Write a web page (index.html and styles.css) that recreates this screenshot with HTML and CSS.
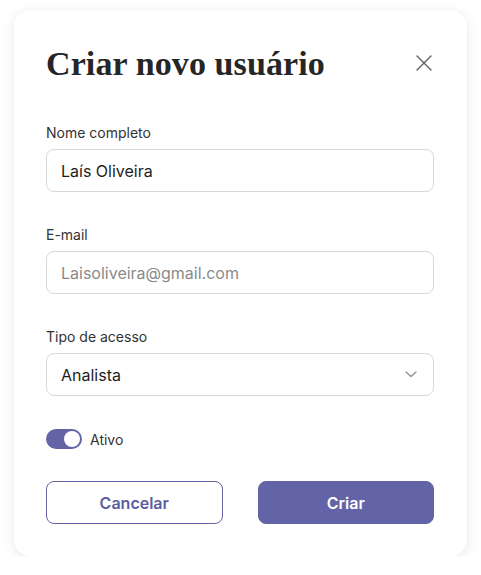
FILE: index.html
```html
<!DOCTYPE html>
<html lang="pt-BR">
<head>
<meta charset="utf-8">
<title>Criar novo usuário</title>
<link rel="stylesheet" href="styles.css">
</head>
<body>
<div class="card">
  <div class="header">
    <h1 class="title">Criar novo usuário</h1>
    <button class="close" aria-label="Fechar">
      <svg width="16" height="16" viewBox="0 0 16 16"><path d="M1 1L15 15M15 1L1 15" stroke="#5f5f5f" stroke-width="1.4" fill="none" stroke-linecap="round"/></svg>
    </button>
  </div>
  <div class="fields">
    <div class="field">
      <label class="label">Nome completo</label>
      <div class="input"><span class="value">Laís Oliveira</span></div>
    </div>
    <div class="field">
      <label class="label">E-mail</label>
      <div class="input"><span class="placeholder">Laisoliveira@gmail.com</span></div>
    </div>
    <div class="field">
      <label class="label">Tipo de acesso</label>
      <div class="input select"><span class="value">Analista</span>
        <svg width="12" height="7" viewBox="0 0 12 7"><path d="M1 1L6 5.5L11 1" stroke="#8a8a8a" stroke-width="1.2" fill="none" stroke-linecap="round" stroke-linejoin="round"/></svg>
      </div>
    </div>
    <div class="toggle-row">
      <span class="toggle"><span class="knob"></span></span>
      <span class="toggle-label">Ativo</span>
    </div>
  </div>
  <div class="actions">
    <button class="btn btn-outline">Cancelar</button>
    <button class="btn btn-primary">Criar</button>
  </div>
</div>
</body>
</html>
```
FILE: styles.css
```css
* { box-sizing: border-box; }
body {
  margin: 0;
  background: #ffffff;
  font-family: Inter, "Noto Sans", sans-serif;
}
.card {
  margin: 10px 0 0 14px;
  width: 453px;
  height: 546px;
  background: #fff;
  border-radius: 16px;
  box-shadow: 0 4px 16px rgba(0,0,0,0.08), 0 0 4px rgba(0,0,0,0.03);
  padding: 34px 33px 32px 32px;
  display: flex;
  flex-direction: column;
}
.header {
  display: flex;
  align-items: center;
  justify-content: space-between;
  height: 40px;
}
.title {
  margin: 0;
  font-family: "Liberation Serif", "DejaVu Serif", serif;
  font-weight: bold;
  font-size: 34px;
  line-height: 40px;
  color: #262626;
  letter-spacing: 0.1px;
}
.close {
  border: 0;
  background: none;
  padding: 0;
  width: 16px;
  height: 16px;
  margin-right: 2px;
  margin-top: -2px;
  display: flex;
}
.fields {
  margin-top: 39px;
  display: flex;
  flex-direction: column;
  gap: 33px;
}
.field {
  display: flex;
  flex-direction: column;
  gap: 6px;
}
.label {
  font-size: 14px;
  line-height: 20px;
  color: #333;
}
.input {
  height: 43px;
  border: 1px solid #d9d9d9;
  border-radius: 8px;
  padding: 0 14px;
  display: flex;
  align-items: center;
  font-size: 16px;
}
.value { color: #1e1e1e; }
.placeholder { color: #8a8a8a; }
.select { justify-content: space-between; padding-right: 16px; }
.toggle-row {
  display: flex;
  align-items: center;
  gap: 8px;
  height: 20px;
}
.toggle {
  width: 36px;
  height: 20px;
  border-radius: 10px;
  background: #6264a7;
  display: flex;
  align-items: center;
  justify-content: flex-end;
  padding: 2px;
}
.knob {
  width: 16px;
  height: 16px;
  border-radius: 50%;
  background: #fff;
}
.toggle-label {
  font-size: 14px;
  color: #333;
}
.actions {
  margin-top: 32px;
  display: flex;
  gap: 35px;
}
.btn {
  flex: 1;
  height: 43px;
  border-radius: 8px;
  font-family: Inter, "Noto Sans", sans-serif;
  font-size: 16px;
  font-weight: 600;
}
.btn-outline {
  background: #fff;
  border: 1px solid #6264a7;
  color: #5b5e9f;
}
.btn-primary {
  background: #6264a7;
  border: 1px solid #6264a7;
  color: #fff;
}
```
